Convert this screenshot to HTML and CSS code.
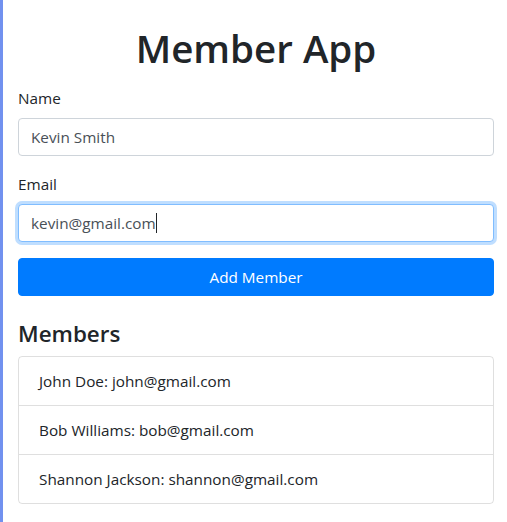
FILE: index.html
```html
<!DOCTYPE html>
<html lang="en">
<head>
<meta charset="utf-8">
<title>Member App</title>
<link rel="stylesheet" href="styles.css">
</head>
<body>
<div class="app">
  <h1 class="title">Member App</h1>
  <form class="member-form">
    <div class="form-group">
      <label class="form-label" for="name">Name</label>
      <input class="form-control" id="name" type="text" value="Kevin Smith">
    </div>
    <div class="form-group">
      <label class="form-label" for="email">Email</label>
      <div class="field">
        <input class="form-control is-focused" id="email" type="text" value="kevin@gmail.com">
        <span class="caret"></span>
      </div>
    </div>
    <button class="btn-primary" type="button">Add Member</button>
  </form>
  <h4 class="section-title">Members</h4>
  <ul class="list-group">
    <li class="list-item">John Doe: john@gmail.com</li>
    <li class="list-item">Bob Williams: bob@gmail.com</li>
    <li class="list-item">Shannon Jackson: shannon@gmail.com</li>
  </ul>
</div>
</body>
</html>
```

FILE: styles.css
```css
* { box-sizing: border-box; }
html, body { margin: 0; padding: 0; background: #fff; }
body {
  font-family: "Open Sans", "Noto Sans", sans-serif;
  font-size: 15.3px;
  line-height: 1.5;
  color: #212529;
  border-left: 3px solid #7191ef;
  min-height: 522px;
}
.app {
  padding: 24px 13px 0 15px;
}
.title {
  margin: 0 0 14px;
  font-size: 38.5px;
  font-weight: 600;
  line-height: 48px;
  text-align: center;
  color: #212529;
}
.form-group { margin-bottom: 16px; }
.form-label {
  display: block;
  margin-bottom: 8px;
  line-height: 24px;
}
.field { position: relative; }
.form-control {
  display: block;
  width: 100%;
  height: 38px;
  padding: 6px 12px;
  font-family: inherit;
  font-size: 15.3px;
  line-height: 24px;
  color: #495057;
  background: #fff;
  border: 1px solid #ced4da;
  border-radius: 4px;
  outline: none;
}
.form-control.is-focused {
  border-color: #80bdff;
  box-shadow: 0 0 0 3px rgba(0, 123, 255, 0.25);
}
.caret {
  position: absolute;
  left: 138px;
  top: 9px;
  width: 1px;
  height: 20px;
  background: #212529;
}
.btn-primary {
  display: block;
  width: 100%;
  height: 38px;
  padding: 6px 12px;
  font-family: inherit;
  font-size: 15.3px;
  line-height: 24px;
  color: #fff;
  background: #007bff;
  border: 1px solid #007bff;
  border-radius: 4px;
}
.section-title {
  margin: 24px 0 8px;
  font-size: 22.4px;
  font-weight: 600;
  line-height: 28px;
}
.list-group {
  list-style: none;
  margin: 0;
  padding: 0;
  border: 1px solid rgba(0, 0, 0, 0.125);
  border-radius: 4px;
}
.list-item {
  padding: 12px 20px;
  line-height: 24px;
}
.list-item + .list-item {
  border-top: 1px solid rgba(0, 0, 0, 0.125);
}
```
